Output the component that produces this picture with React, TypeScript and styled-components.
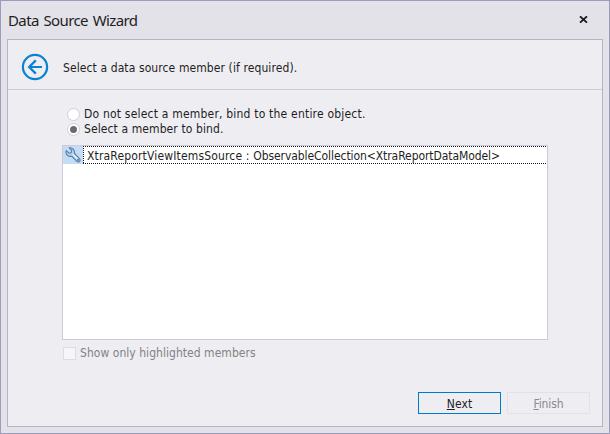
import React from 'react';
import styled, { createGlobalStyle } from 'styled-components';

const GlobalStyle = createGlobalStyle`
  * { box-sizing: border-box; }
  body { margin: 0; }
`;

const Dialog = styled.main`
  display: flex;
  flex-direction: column;
  width: 610px;
  height: 434px;
  padding: 0 6px 6px;
  border: 1px solid #9c9cbc;
  background: #e3e2e8;
  color: #1e1e1e;
  font-family: "DejaVu Sans Condensed", "DejaVu Sans", sans-serif;
  font-stretch: condensed;
  font-size: 12px;
  line-height: 15px;
`;

const Label = styled.span<{ $track?: number }>`
  white-space: pre;
  letter-spacing: ${({ $track = 0 }) => $track}px;
`;

const TitleBar = styled.header`
  display: flex;
  flex: 0 0 38px;
  align-items: center;
  justify-content: space-between;
  padding: 0 15px 0 1px;
`;

const Title = styled.h1`
  margin: 0;
  font: 400 15px/20px "Noto Sans", sans-serif;
  letter-spacing: -0.62px;
  word-spacing: 1.5px;
`;

const CloseButton = styled.button`
  display: flex;
  padding: 0 0 1px;
  border: 0;
  background: none;
`;

const Panel = styled.section`
  display: flex;
  flex: 1;
  flex-direction: column;
  border: 1px solid #b3b3cb;
  background: #eeedf2;
`;

const StepHeader = styled.div`
  display: flex;
  flex: 0 0 50px;
  align-items: center;
  gap: 14px;
  padding: 4px 0 0 13px;
  border-bottom: 1px solid #cccbdb;
`;

const StepTitle = styled(Label)`
  padding-top: 3px;
`;

const Content = styled.div`
  display: flex;
  flex: 1;
  flex-direction: column;
  padding: 17px 54px 0;
`;

const Options = styled.div`
  display: flex;
  flex-direction: column;
  padding-left: 5px;
`;

const Option = styled.label`
  display: flex;
  align-items: center;
  gap: 4px;
  height: 15px;
`;

const Radio = styled.span<{ $checked?: boolean }>`
  display: flex;
  align-items: center;
  justify-content: center;
  width: 13px;
  height: 13px;
  border: 1px solid #d0cfdb;
  border-radius: 50%;
  background: #fff;

  &::after {
    content: "";
    width: 7px;
    height: 7px;
    border-radius: 50%;
    background: ${({ $checked }) => ($checked ? '#6b6b6b' : 'transparent')};
  }
`;

const MemberList = styled.div`
  width: 486px;
  height: 195px;
  margin-top: 8px;
  border: 1px solid #cccbdb;
  background: #fff;
`;

const MemberRow = styled.div`
  display: flex;
  height: 18px;
`;

const IconCell = styled.div`
  display: flex;
  align-items: center;
  justify-content: center;
  width: 20px;
  background: #c5dcf5;
`;

const FocusedCell = styled.div`
  display: flex;
  flex: 1;
  align-items: center;
  padding: 2px 0 0 4px;
  background:
    repeating-linear-gradient(90deg, #1a1a1a 0 1px, #fff 1px 2px) top / 100% 1px no-repeat,
    repeating-linear-gradient(90deg, #1a1a1a 0 1px, #fff 1px 2px) bottom / 100% 1px no-repeat,
    repeating-linear-gradient(180deg, #1a1a1a 0 1px, #fff 1px 2px) left / 1px 100% no-repeat;
`;

const CheckOption = styled.label`
  display: flex;
  align-items: center;
  gap: 4px;
  height: 15px;
  margin: 6px 0 0 1px;
  color: #838383;
`;

const CheckBox = styled.span`
  width: 13px;
  height: 13px;
  border: 1px solid #dddce5;
  background: #f6f5f8;
`;

const Footer = styled.footer`
  display: flex;
  justify-content: flex-end;
  gap: 6px;
  padding: 0 12px 12px 0;
`;

const Button = styled.button<{ $primary?: boolean }>`
  display: flex;
  align-items: center;
  justify-content: center;
  width: 83px;
  height: 22px;
  padding: 2px 0 0;
  border: 1px solid ${({ $primary }) => ($primary ? '#007acc' : '#e2e1e8')};
  background: #eeedf2;
  color: ${({ $primary }) => ($primary ? '#1e1e1e' : '#8b8b8b')};
  font: inherit;
`;

const AccessKey = styled.span`
  text-decoration: underline;
  text-decoration-thickness: 1px;
  text-underline-offset: 1px;
  text-decoration-skip-ink: none;
`;

const CloseIcon = () => (
  <svg width="9" height="7" viewBox="0 0 9 7">
    <path d="M1 0.3 8 6.7M8 0.3 1 6.7" stroke="#1e1e1e" strokeWidth="1.8" />
  </svg>
);

const BackIcon = () => (
  <svg width="28" height="28" viewBox="0 0 28 28" fill="none" stroke="#0a82d2">
    <circle cx="14" cy="14" r="12.1" strokeWidth="2.2" />
    <path d="M21 14H8.5" strokeWidth="2" />
    <path d="M14.8 7.4 8.2 14l6.6 6.6" strokeWidth="2.3" />
  </svg>
);

const WrenchIcon = () => (
  <svg width="16" height="16" viewBox="0 0 16 16">
    <path
      d="M4.2.9 6.7 3.4 6.2 5.7 4 6.2 1.3 3.6C.3 6.6 2.1 9.5 5.5 9.4L6.7 9.2 11.5 14.2C13.7 16.3 16.5 13.4 14.3 11.3L9.4 6.5C10.1 3.3 7.8.3 4.2.9Z"
      fill="#b5d0eb"
      stroke="#5580ab"
      strokeWidth="1.1"
      strokeLinejoin="round"
    />
    <path d="m7.8 7.2 4.3 4.3" stroke="#edf6ff" strokeWidth="1.2" />
    <circle cx="13" cy="12.9" r=".9" fill="#40698f" />
  </svg>
);

export default function App() {
  return (
    <>
      <GlobalStyle />
      <Dialog>
        <TitleBar>
          <Title>Data Source Wizard</Title>
          <CloseButton aria-label="Close"><CloseIcon /></CloseButton>
        </TitleBar>
        <Panel>
          <StepHeader>
            <BackIcon />
            <StepTitle $track={0.1}>Select a data source member (if required).</StepTitle>
          </StepHeader>
          <Content>
            <Options>
              <Option>
                <Radio />
                <Label $track={0.2}>Do not select a member, bind to the entire object.</Label>
              </Option>
              <Option>
                <Radio $checked />
                <Label $track={0.1}>Select a member to bind.</Label>
              </Option>
            </Options>
            <MemberList>
              <MemberRow>
                <IconCell><WrenchIcon /></IconCell>
                <FocusedCell>
                  <Label $track={0.16}>{'XtraReportViewItemsSource : '}</Label>
                  <Label $track={-0.07}>{'ObservableCollection<XtraReportDataModel>'}</Label>
                </FocusedCell>
              </MemberRow>
            </MemberList>
            <CheckOption>
              <CheckBox />
              <Label $track={0.04}>Show only highlighted members</Label>
            </CheckOption>
          </Content>
          <Footer>
            <Button $primary><Label $track={0.1}><AccessKey>N</AccessKey>ext</Label></Button>
            <Button disabled><Label $track={-0.1}><AccessKey>F</AccessKey>inish</Label></Button>
          </Footer>
        </Panel>
      </Dialog>
    </>
  );
}
